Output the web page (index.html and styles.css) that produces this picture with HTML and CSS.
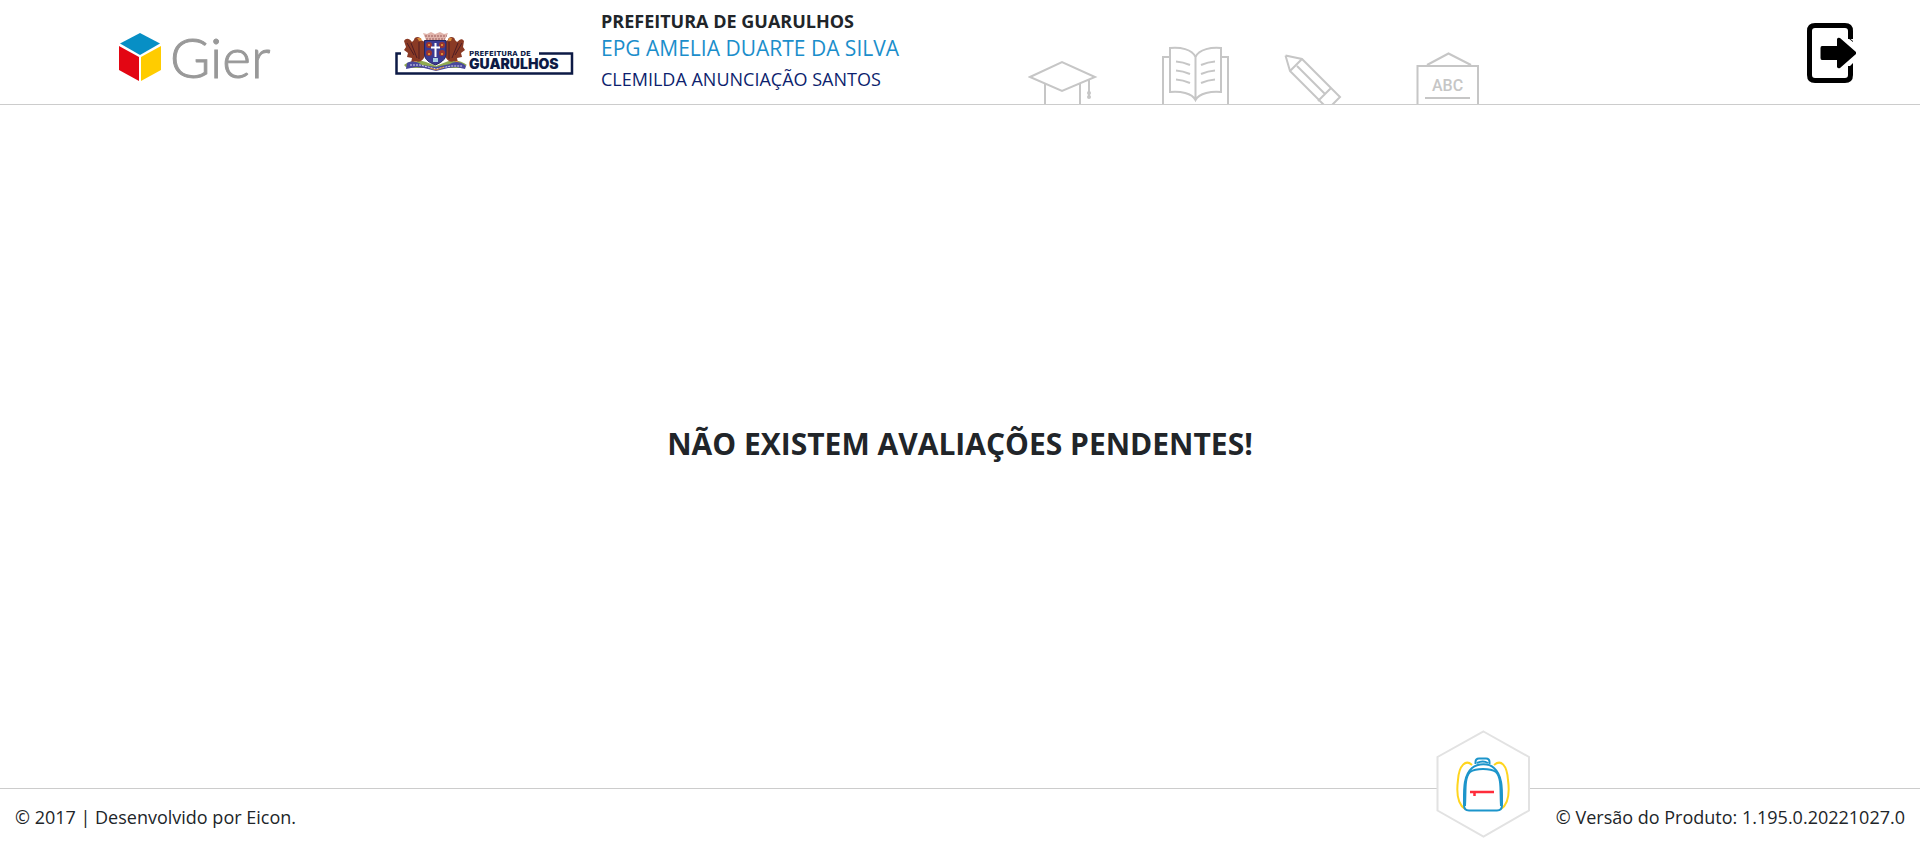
FILE: index.html
```html
<!DOCTYPE html>
<html lang="pt-BR">
<head>
<meta charset="utf-8">
<title>Gier</title>
<meta name="viewport" content="width=device-width, initial-scale=1">
<link rel="stylesheet" href="styles.css">
</head>
<body>
<header class="header">
  <svg class="brand" viewBox="0 0 154 52" role="img" aria-label="Gier">
    <path fill="#078fc5" d="M21 1 41 11.500 21 23 1 11.500Z"/>
    <path fill="#e30613" d="M0 14 20 25V49L0 38Z"/>
    <path fill="#fc0" d="M22 25 42 14V38L22 49Z"/>
    <text class="brand-name" x="51" y="46">Gier</text>
  </svg>

  <svg class="city" viewBox="0 0 180 48" role="img" aria-label="Prefeitura de Guarulhos">
    <path d="M7 23.500H2.500V43.500H178V23.500H145" fill="none" stroke="#0d1a45" stroke-width="2.500"/>
    <path fill="#fff" d="M8 20h66v17H8z"/>
    <path fill="#8fa94f" d="M10 35C16 30 26 30 32 32L42 36 52 32C60 29 68 31 73 35L68 38H13Z"/>
    <path fill="#8a3a25" d="M10 11C12 8 15 8 18 12L20 10C20 6 27 6 27 10L31 12V25C30 30 26 33 22 31L17 33 18 28 13 27 14 23 10 20 12 17Z"/>
    <path fill="#8a3a25" d="M70 11C68 8 66 9 63 12L61 10C61 6 54 6 54 10L51 12V25C52 30 56 33 60 31L64 33 63 28 68 27 67 23 71 20 69 17Z"/>
    <path fill="none" stroke="#4f1d24" stroke-width="1" d="M13 13 20 25M17 13 23 28M68 13 61 25M64 13 58 28M25 12V29M55 12V29"/>
    <path fill="#d98b37" d="M23 8h4l1 3h-3zM55 8h3l-1 3h-3zM20 31h3l-2 3h-3zM61 31h3l2 3h-3z"/>
    <path fill="#e0b3aa" d="M29 3 33 4 37 2 41 4 46 2 50 4 54 3 51 10H32Z"/>
    <path fill="none" stroke="#9c5c5c" stroke-width="1" stroke-dasharray="2 1" d="M31 6H53M32 9H51"/>
    <path fill="#3b3a91" stroke="#25255e" d="M30.500 10.500H52V24C52 30 46 33 41.500 35C36 33 30.500 30 30.500 24Z"/>
    <g fill="#9b3430"><circle cx="35" cy="15" r="3"/><circle cx="48" cy="15" r="3"/><circle cx="35" cy="23" r="3"/><circle cx="48" cy="23" r="3"/></g>
    <path fill="#d98b37" d="M34 14h2v2h-2zM47 14h2v2h-2zM34 23h2v2h-2zM47 23h2v2h-2z"/>
    <path stroke="#fff" stroke-width="2" d="M41.500 13V27M37 17.500H46"/>
    <path fill="#a7cfe2" d="M39 28h5v4h-5z"/>
    <path fill="#4a489b" d="M13 33C19 30 24 32 28 35L42 37 56 34C60 31 67 31 72 36L71 39 62 37 54 38 42 41 30 38 22 37 12 39Z"/>
    <path fill="none" stroke="#d8d7ef" stroke-width="1" stroke-dasharray="2 1" d="M16 35 26 35 42 39 57 36 68 36"/>
    <path fill="none" stroke="#d98b37" stroke-width="1" d="M36 38 42 40 50 37"/>
    <text class="city-small" x="75" y="26">PREFEITURA DE</text>
    <text class="city-large" x="75" y="39">GUARULHOS</text>
  </svg>

  <div class="identity">
    <strong class="identity-city">PREFEITURA DE GUARULHOS</strong>
    <span class="identity-school">EPG AMELIA DUARTE DA SILVA</span>
    <span class="identity-user">CLEMILDA ANUNCIAÇÃO SANTOS</span>
  </div>

  <svg class="art" viewBox="0 0 454 60" aria-hidden="true">
    <path d="M2 33 34 18 67 33 34 47ZM17 40V60M52 40V60M61 36V53"/>
    <circle class="art-dot" cx="61" cy="49" r="2"/><circle class="art-dot" cx="61" cy="53" r="2"/>
    <path d="M142 13H135V60M193 13H200V60M142 4C152 3 164 5 167.500 13C171 5 184 3 193 4V48C184 47 171 49 167.500 56C164 49 152 47 142 48ZM167.500 13V56"/>
    <path d="M148 17.500Q155 18 162 21M148 26.500Q155 27 162 30M148 35.500Q155 36 162 39M187 17.500Q180 18 173 21M187 26.500Q180 27 173 30M187 35.500Q180 36 173 39"/>
    <path d="M257.500 11.500 274 15 312 53 303 62M257.500 11.500 262 27 297 62M274 15 262 27M269 22 297 50M303 44 290 57"/>
    <path d="M389.500 60V22H450V60M399 21 420.500 9.500 443 21M397 54H442"/>
    <text class="art-text" x="404" y="47">ABC</text>
  </svg>

  <button class="exit" type="button" aria-label="Sair">
    <svg class="exit-icon" viewBox="0 0 50 60" aria-hidden="true">
      <path fill="none" stroke="#000" stroke-width="5" d="M43.500 16V8Q43.500 2.500 38 2.500H8Q2.500 2.500 2.500 8V52Q2.500 57.500 8 57.500H38Q43.500 57.500 43.500 52V43"/>
      <path d="M41 14 46 18V19L41 15ZM41 45 46 40V45Z"/>
      <path d="M15 23H30V16Q31 14 33 15L49 29V31L33 45Q31 46 30 44V37H15Q13.500 37 13.500 35V25Q13.500 23 15 23Z"/>
    </svg>
  </button>
</header>

<main class="main">
  <h1 class="message">NÃO EXISTEM AVALIAÇÕES PENDENTES!</h1>
</main>

<footer class="footer">
  <span>© 2017 | Desenvolvido por Eicon.</span>
  <svg class="badge" viewBox="0 0 94 108" aria-hidden="true">
    <path fill="#fff" stroke="#e2e2e2" stroke-width="2" d="M47.500 1.500 93 27V80.500L47.500 106.500 1.500 80.500V27Z"/>
    <g fill="none" stroke-width="2">
      <path stroke="#ffd51f" d="M36 35C30 29 23 35 22 50C20 65 23 75 29 79M58 35C65 29 71 35 72 50C74 65 71 75 65 79"/>
      <path stroke="#1c95cb" d="M28 75C28 60 27 46 36 38C42 33 53 33 58 38C67 46 66 60 66 75Q66 80.500 61 80.500H33Q28 80.500 28 75Z"/>
      <path stroke="#1c95cb" d="M29 76C30 62 28 48 34 42C40 38 54 38 60 42C66 48 64 62 65 76M39.500 34V32Q39.500 28.500 43 28.500H50Q53.500 28.500 53.500 32V34M41 33Q47 30 52 33"/>
      <path stroke="#ff2c3b" stroke-width="2.500" d="M34 62H58M38.500 62V66"/>
    </g>
  </svg>
  <span>© Versão do Produto: 1.195.0.20221027.0</span>
</footer>
</body>
</html>
```
FILE: styles.css
```css
* {
  box-sizing: border-box;
}

body {
  display: flex;
  flex-direction: column;
  min-height: 100vh;
  margin: 0;
  background: #fff;
  color: #212529;
  font-family: "Open Sans", sans-serif;
  font-size: 18px;
  line-height: 24px;
}

.header {
  display: flex;
  align-items: center;
  padding: 0 63px 0 119px;
  border-bottom: 1px solid #ccc;
}

.brand {
  flex: none;
  width: 154px;
  margin: 12px 121px 0 0;
  overflow: visible;
}

.brand-name {
  fill: #999;
  stroke: #999;
  stroke-width: 1;
  font: 300 55px Lato, sans-serif;
}

.city {
  flex: none;
  width: 180px;
  margin: 4px 27px 0 0;
}

.city-small,
.city-large {
  fill: #0d1a45;
}

.city-small {
  font: 700 7px "DejaVu Sans", sans-serif;
}

.city-large {
  font: 900 14px Inter, sans-serif;
}

.identity {
  display: flex;
  flex: none;
  flex-direction: column;
  width: 427px;
  padding: 8px 0;
}

.identity-city {
  line-height: 26px;
  font-weight: 700;
}

.identity-school {
  color: #1b8ecb;
  font-size: 21px;
  line-height: 28px;
}

.identity-user {
  color: #0d1f6e;
  line-height: 34px;
}

.art {
  flex: none;
  align-self: flex-end;
  width: 454px;
  fill: none;
  stroke: #c6c6c6;
  stroke-width: 2;
}

.art-dot {
  fill: #c6c6c6;
  stroke: none;
}

.art-text {
  fill: #c6c6c6;
  stroke: none;
  font: 500 16px Roboto, sans-serif;
}

.exit {
  margin: 2px 0 0 auto;
  padding: 0;
  border: 0;
  background: none;
  cursor: pointer;
}

.exit-icon {
  display: block;
  width: 50px;
}

.main {
  display: flex;
  flex: 1;
  align-items: center;
  justify-content: center;
}

.message {
  margin: 0 0 6px;
  font-size: 30px;
  font-weight: 700;
  line-height: 36px;
}

.footer {
  position: relative;
  display: flex;
  justify-content: space-between;
  padding: 16px 15px 17px;
  border-top: 1px solid #ccc;
}

.badge {
  position: absolute;
  right: 390px;
  bottom: 8px;
  width: 94px;
}
```
